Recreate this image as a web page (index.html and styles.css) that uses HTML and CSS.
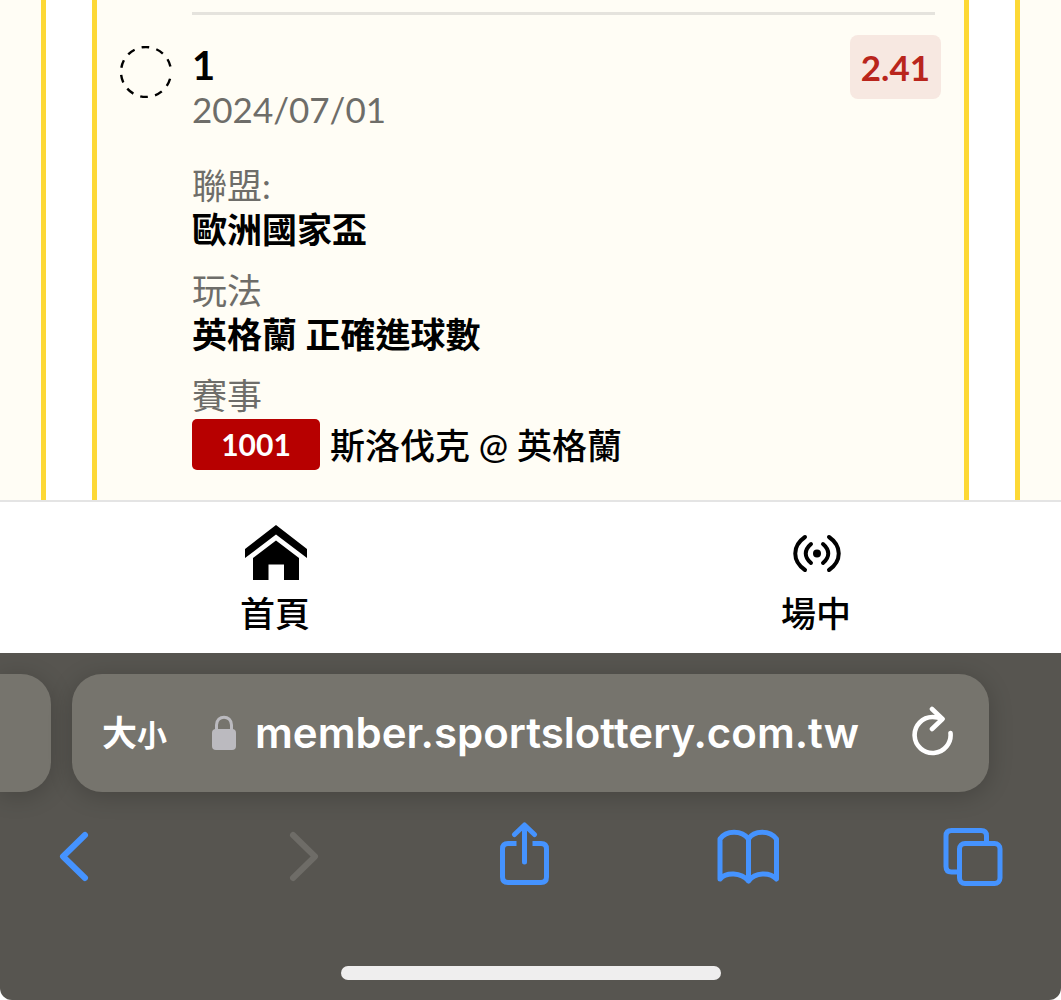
FILE: index.html
```html
<!DOCTYPE html>
<html lang="zh-Hant">
<head>
<meta charset="utf-8">
<meta name="viewport" content="width=device-width, initial-scale=1">
<title>投注單</title>
<link rel="stylesheet" href="styles.css">
</head>
<body>
<main class="slides">
  <div class="peek peek-left"></div>
  <article class="ticket">
    <hr class="divider">
    <div class="entry">
      <svg class="status" viewBox="0 0 52 52" aria-hidden="true"><circle cx="26" cy="26" r="25" pathLength="360" fill="none" stroke="#000" stroke-width="2.400" stroke-dasharray="18 16.800" stroke-dashoffset="-16"/></svg>
      <div class="details">
        <header class="entry-head">
          <div>
            <h1 class="number">1</h1>
            <time class="date" datetime="2024-07-01">2024/07/01</time>
          </div>
          <span class="odds">2.41</span>
        </header>
        <dl class="facts">
          <div class="fact"><dt>聯盟:</dt><dd>歐洲國家盃</dd></div>
          <div class="fact"><dt>玩法</dt><dd>英格蘭 正確進球數</dd></div>
          <div class="fact"><dt>賽事</dt><dd class="match"><span class="code">1001</span><span class="teams">斯洛伐克 @ 英格蘭</span></dd></div>
        </dl>
      </div>
    </div>
  </article>
  <div class="peek peek-right"></div>
</main>

<nav class="tabs">
  <a class="tab" href="#home">
    <svg class="tab-icon" viewBox="0 0 64 58" aria-hidden="true"><path d="M33 0 64 24V33L33 9.500 2 33V24Z"/><path d="M33 15.500 56 33V55H41V39.500H25.500V55H10V33Z"/></svg>
    <span>首頁</span>
  </a>
  <a class="tab" href="#live">
    <svg class="tab-icon" viewBox="0 0 64 58" aria-hidden="true"><circle cx="33" cy="28.500" r="4"/><g fill="none" stroke="#000" stroke-width="4" stroke-linecap="round"><path d="M21 12C8 21 8 36 21 45M27 19C20 25 20 32 27 38M45 12C58 21 58 36 45 45M39 19C46 25 46 32 39 38"/></g></svg>
    <span>場中</span>
  </a>
</nav>

<footer class="browser">
  <div class="bars">
    <div class="bar-peek"></div>
    <div class="bar">
      <button class="text-size" type="button">大<small>小</small></button>
      <div class="address">
        <svg class="lock" viewBox="0 0 26 36" aria-hidden="true"><rect x="1" y="14" width="24" height="21" rx="4" fill="#bbbabf"/><path d="M5.500 15V10C5.500-0.500 20.500-0.500 20.500 10V15" fill="none" stroke="#bbbabf" stroke-width="3"/></svg>
        <span>member.sportslottery.com.tw</span>
      </div>
      <button class="reload" type="button" aria-label="重新載入">
        <svg viewBox="0 0 42 54" fill="none" stroke="#fff" stroke-width="4.600" stroke-linecap="round" stroke-linejoin="round" aria-hidden="true"><path d="M38.500 27A18 18 0 1 1 20.500 11Q26 11 30 13"/><path d="M20 3 30.500 13 20 23"/></svg>
      </button>
    </div>
  </div>
  <div class="tools">
    <button class="tool" type="button" aria-label="上一頁"><svg viewBox="0 0 64 68"><path d="M43 13 21 34.500 43 56"/></svg></button>
    <button class="tool tool-off" type="button" aria-label="下一頁" disabled><svg viewBox="0 0 64 68"><path d="M26 13 48 34.500 26 56"/></svg></button>
    <button class="tool" type="button" aria-label="分享"><svg viewBox="0 0 64 68"><path class="butt" d="M24.500 21.500H16Q10.500 21.500 10.500 27V55Q10.500 60.500 16 60.500H49Q54.500 60.500 54.500 55V27Q54.500 21.500 49 21.500H40.500"/><path class="thin" d="M32.500 40V4M22.500 12.500 32.500 3 42.500 12.500"/></svg></button>
    <button class="tool" type="button" aria-label="書籤"><svg viewBox="0 0 64 68"><path class="thin" d="M32.500 17C26 8 10 8 4 17V57C10 50 25 50 32.500 59C39 50 54 50 60.500 57V17C54 8 38 8 32.500 17V59"/></svg></button>
    <button class="tool" type="button" aria-label="分頁"><svg viewBox="0 0 64 68"><path class="thin" d="M16 50H10.500Q5 50 5 44.500V14Q5 8.500 10.500 8.500H40Q45.500 8.500 45.500 14V20"/><rect class="thin" x="18.500" y="21.500" width="40.500" height="40" rx="5.500"/></svg></button>
  </div>
  <div class="home-indicator"></div>
</footer>
</body>
</html>
```

FILE: styles.css
```css
* {
  box-sizing: border-box;
}

body {
  margin: 0;
  min-height: 100vh;
  display: flex;
  flex-direction: column;
  background: #fff;
  color: #000;
  font: 35px/44px Lato, "Noto Sans CJK TC", sans-serif;
}

button {
  border: 0;
  padding: 0;
  background: none;
  color: inherit;
  font: inherit;
}

svg {
  display: block;
}

/* Ticket carousel */
.slides {
  display: flex;
  flex: 1;
  gap: 46px;
}

.peek {
  flex: 0 0 46px;
  background: #fffdf5;
}

.peek-left {
  border-right: 5px solid #fdd835;
}

.peek-right {
  border-left: 5px solid #fdd835;
}

.ticket {
  flex: 1;
  padding: 12px 23px 30px;
  background: #fffdf5;
  border: solid #fdd835;
  border-width: 0 5px;
}

.divider {
  height: 3px;
  margin: 0 6px 20px 72px;
  border: 0;
  background: #e5e3dd;
}

.entry {
  display: flex;
  gap: 20px;
}

.status {
  flex: none;
  width: 52px;
  height: 52px;
  margin-top: 11px;
}

.details {
  flex: 1;
}

.entry-head {
  display: flex;
  justify-content: space-between;
  align-items: flex-start;
  padding-bottom: 32px;
}

.number {
  margin: 8px 0 0;
  font-size: 40px;
  line-height: 44px;
}

.date {
  display: block;
  color: #6e6d69;
}

.odds {
  padding: 10px 11px;
  border-radius: 8px;
  background: #f7e8e1;
  color: #b9251c;
  font-weight: 700;
}

.facts {
  display: grid;
  gap: 17px;
  margin: 0;
}

.fact dt {
  color: #6e6d69;
}

.fact dd {
  margin: 0;
  font-weight: 700;
}

.fact .match {
  display: flex;
  align-items: center;
  gap: 10px;
  padding-top: 2px;
  font-weight: 500;
}

.code {
  width: 128px;
  border-radius: 5px;
  background: #b70000;
  color: #fff;
  font-size: 30px;
  font-weight: 700;
  line-height: 51px;
  text-align: center;
}

/* Site navigation */
.tabs {
  display: flex;
  justify-content: space-between;
  padding: 23px 210px 18px 240px;
  border-top: 2px solid #e4e4e4;
}

.tab {
  display: flex;
  flex-direction: column;
  align-items: center;
  gap: 8px;
  color: inherit;
  font-weight: 500;
  text-decoration: none;
}

.tab-icon {
  width: 64px;
  height: 58px;
}

/* Browser toolbar */
.browser {
  padding: 21px 0 20px;
  border-radius: 0 0 12px 12px;
  background: #575550;
}

.bars {
  display: flex;
  gap: 21px;
  padding-right: 72px;
}

.bar-peek {
  flex: 0 0 51px;
  border-radius: 0 30px 30px 0;
  background: #76746d;
  box-shadow: 0 4px 24px #0003;
}

.bar {
  display: flex;
  flex: 1;
  align-items: center;
  height: 118px;
  padding: 0 35px 0 30px;
  border-radius: 30px;
  background: #76746d;
  box-shadow: 0 4px 24px #0003;
  color: #fff;
}

.text-size {
  font-weight: 700;
}

.text-size small {
  font-size: 30px;
}

.address {
  display: flex;
  align-items: center;
  gap: 18px;
  margin: 0 auto 0 44px;
  font-family: Inter, sans-serif;
  font-size: 42px;
  font-weight: 600;
}

.lock {
  width: 26px;
  height: 36px;
}

.reload svg {
  width: 42px;
  height: 54px;
}

.tools {
  display: flex;
  justify-content: space-between;
  padding: 30px 56px 76px 42px;
}

.tool {
  width: 64px;
  height: 68px;
  color: #4593ff;
}

.tool-off {
  color: #6e6c67;
}

.tool svg {
  width: 64px;
  height: 68px;
  fill: none;
  stroke: currentColor;
  stroke-width: 6;
  stroke-linecap: round;
  stroke-linejoin: round;
}

.tool .butt {
  stroke-width: 5;
  stroke-linecap: butt;
}

.tool .thin {
  stroke-width: 5;
}

.home-indicator {
  width: 380px;
  height: 14px;
  margin: 0 auto;
  border-radius: 7px;
  background: #efeeee;
}
```
